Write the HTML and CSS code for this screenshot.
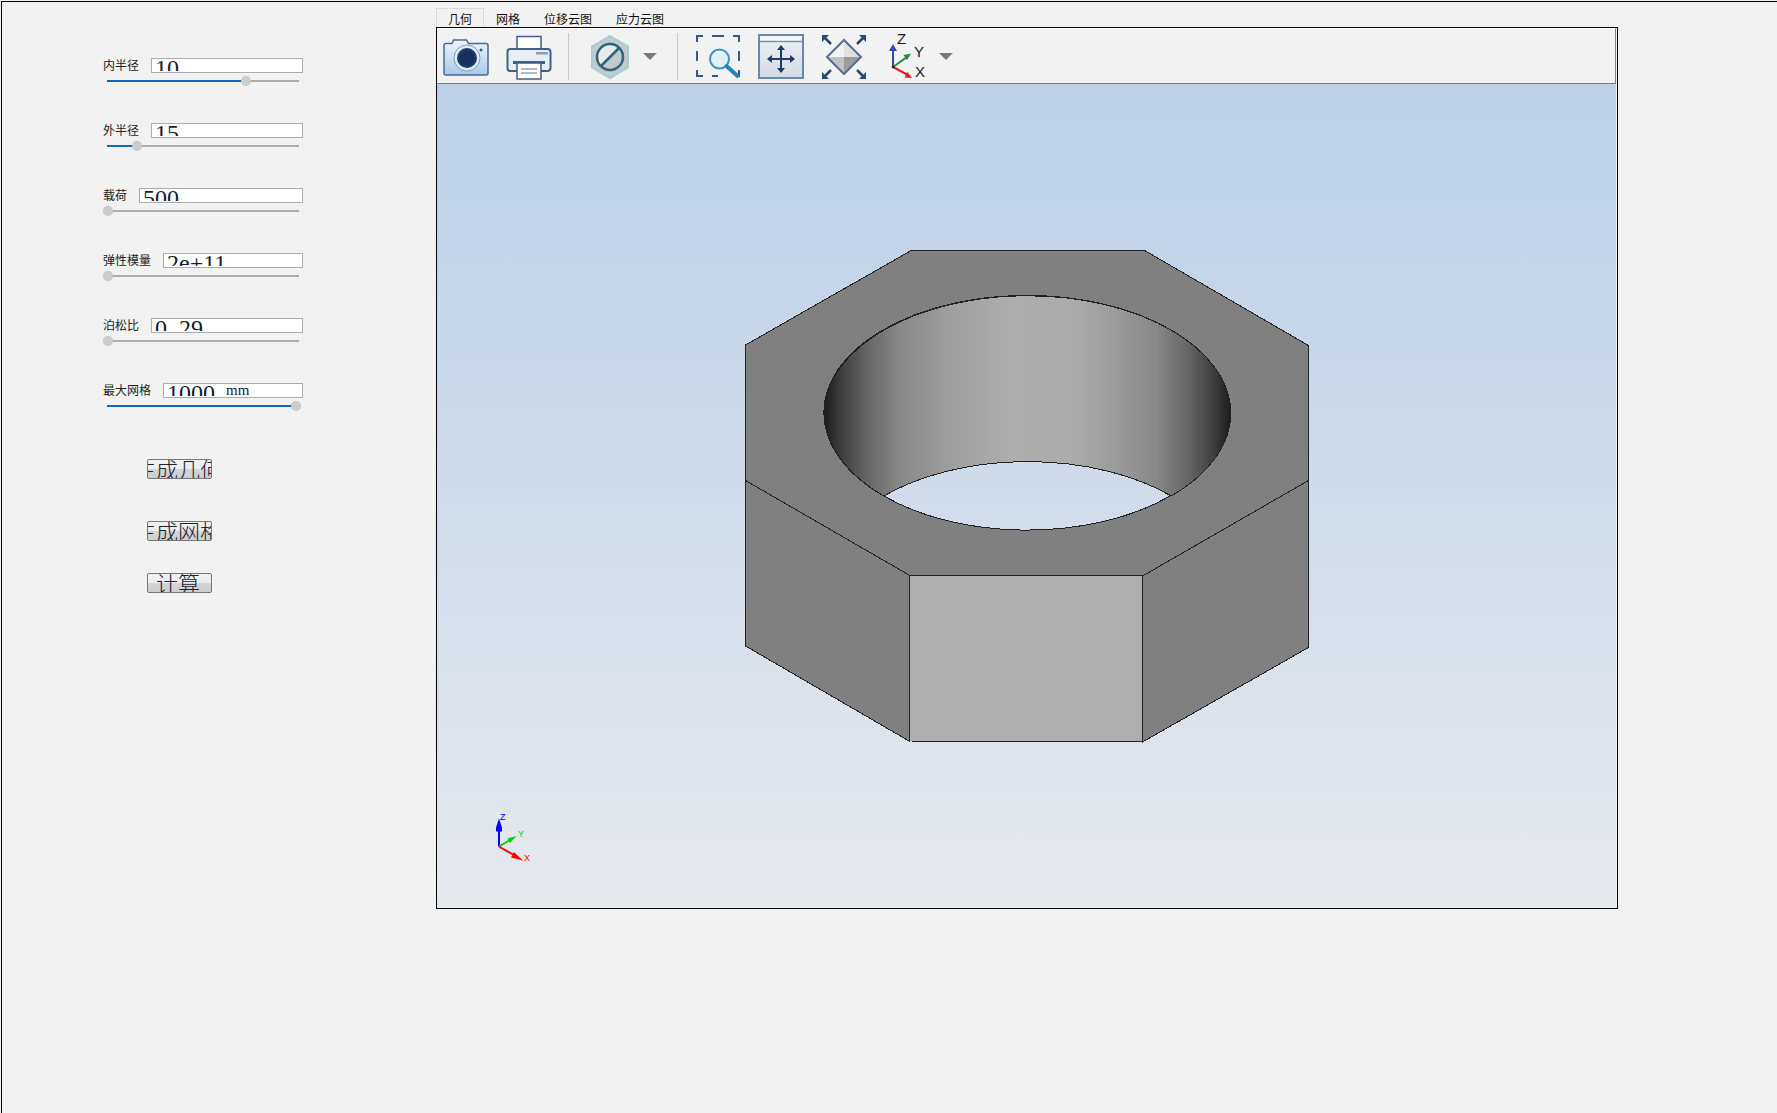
FILE: index.html
```html
<!DOCTYPE html>
<html lang="zh">
<head>
<meta charset="utf-8">
<title>几何</title>
<link rel="stylesheet" href="styles.css">
</head>
<body>
<div class="app">
  <aside class="panel">
    <div class="param">
      <div class="param-head"><span class="param-label">内半径</span><div class="field"><div class="field-clip">10</div></div></div>
      <div class="slider"><div class="slider-fill" style="width:72.4%"></div><div class="slider-thumb" style="left:72.4%"></div></div>
    </div>
    <div class="param">
      <div class="param-head"><span class="param-label">外半径</span><div class="field"><div class="field-clip">15</div></div></div>
      <div class="slider"><div class="slider-fill" style="width:15.6%"></div><div class="slider-thumb" style="left:15.6%"></div></div>
    </div>
    <div class="param">
      <div class="param-head"><span class="param-label">载荷</span><div class="field"><div class="field-clip">500</div></div></div>
      <div class="slider"><div class="slider-thumb" style="left:0.5%"></div></div>
    </div>
    <div class="param">
      <div class="param-head"><span class="param-label">弹性模量</span><div class="field"><div class="field-clip">2e+11</div></div></div>
      <div class="slider"><div class="slider-thumb" style="left:0.5%"></div></div>
    </div>
    <div class="param">
      <div class="param-head"><span class="param-label">泊松比</span><div class="field"><div class="field-clip">0<span class="dot">.</span>29</div></div></div>
      <div class="slider"><div class="slider-thumb" style="left:0.5%"></div></div>
    </div>
    <div class="param">
      <div class="param-head"><span class="param-label">最大网格</span><div class="field"><div class="field-clip">1000<span class="unit">mm</span></div></div></div>
      <div class="slider"><div class="slider-fill" style="width:98.6%"></div><div class="slider-thumb" style="left:98.6%"></div></div>
    </div>
    <button class="btn btn-geom" type="button">生成几何</button>
    <button class="btn btn-mesh" type="button">生成网格</button>
    <button class="btn btn-calc" type="button">计算</button>
  </aside>

  <main class="workspace">
    <nav class="tabs">
      <span class="tab tab-active">几何</span>
      <span class="tab">网格</span>
      <span class="tab">位移云图</span>
      <span class="tab">应力云图</span>
    </nav>
    <section class="frame">
      <div class="toolbar">
        <svg class="tool tool-camera" viewBox="0 0 48 48">
          <defs>
            <linearGradient id="camBody" x1="0" y1="0" x2="0" y2="1"><stop offset="0" stop-color="#f0f5fb"/><stop offset="1" stop-color="#a9c8ea"/></linearGradient>
          </defs>
          <path d="M2 13.500q0-2 2-2h6l1.500-3.500h13l2 3.500h17.500q2 0 2 2v27.500q0 2-2 2h-40q-2 0-2-2z" fill="url(#camBody)" stroke="#4a6a92" stroke-width="1.500"/>
          <circle cx="25" cy="26" r="13" fill="#e4edf7" stroke="#7f9cc0"/>
          <circle cx="25" cy="26" r="10" fill="#1b3a6e"/>
          <circle cx="25" cy="26" r="7.500" fill="#16305e"/>
          <circle cx="39" cy="18" r="1.500" fill="#41618c"/>
        </svg>
        <svg class="tool tool-print" viewBox="0 0 48 48">
          <rect x="12" y="4.500" width="24" height="14" fill="#fff" stroke="#3e5f88" stroke-width="1.500"/>
          <rect x="2.500" y="17" width="43" height="22" rx="3" fill="#e9eef6" stroke="#3e5f88" stroke-width="2"/>
          <rect x="31" y="20" width="12" height="2.500" fill="#8d9fb8"/>
          <rect x="8" y="29" width="32" height="3" fill="#3e5f88"/>
          <rect x="12" y="31" width="24" height="16" fill="#fff" stroke="#3e5f88" stroke-width="1.500"/>
          <path d="M16 37h16M16 41h16" stroke="#8ea2bc" stroke-width="1.500"/>
        </svg>
        <span class="tool-sep tool-sep-a"></span>
        <svg class="tool tool-hex" viewBox="0 0 48 48">
          <path d="M24 4l18 10.500v21l-18 10.500-18-10.500v-21z" fill="#c3c9cc" stroke="#a6cdd2" stroke-width="2"/>
          <path d="M14.500 34.500a13.500 13.500 0 0 1 19-19z" fill="#e8ebec"/>
          <circle cx="24" cy="25" r="13" fill="none" stroke="#2a6778" stroke-width="2.500"/>
          <path d="M15 34l18-18" stroke="#2a6778" stroke-width="2.500"/>
        </svg>
        <span class="tool-drop tool-drop-a"></span>
        <span class="tool-sep tool-sep-b"></span>
        <svg class="tool tool-zoom" viewBox="0 0 48 48">
          <path d="M3 10V4h6M18 4h12M39 4h6v6M45 19v10M45 38v6h-3M9 44H3v-6M3 29V19M18 44h6" fill="none" stroke="#3a5880" stroke-width="2"/>
          <circle cx="25.500" cy="27" r="9.500" fill="#e4eff8" stroke="#3d93c6" stroke-width="2"/>
          <path d="M32.500 34l11 10" stroke="#2684c0" stroke-width="4" stroke-linecap="round"/>
        </svg>
        <svg class="tool tool-pan" viewBox="0 0 48 48">
          <defs>
            <linearGradient id="panBody" x1="0" y1="0" x2="0" y2="1"><stop offset="0" stop-color="#eef1f6"/><stop offset="1" stop-color="#d3dae5"/></linearGradient>
          </defs>
          <rect x="2" y="3" width="44" height="43" fill="url(#panBody)" stroke="#6b87aa" stroke-width="2"/>
          <rect x="3" y="4" width="42" height="5" fill="#f4f6fa"/>
          <path d="M3 9.500h42" stroke="#7a93b3" stroke-width="1.500"/>
          <path d="M24 16v22M13 27h22" stroke="#1f3b62" stroke-width="2"/>
          <path d="M24 13l-4 5h8zM24 41l-4-5h8zM10 27l5-4v8zM38 27l-5-4v8z" fill="#1f3b62"/>
        </svg>
        <svg class="tool tool-fit" viewBox="0 0 48 48">
          <path d="M24 8l-17 17h17z" fill="#f2f2f2"/>
          <path d="M24 8l17 17h-17z" fill="#e0e0e0"/>
          <path d="M24 42l-17-17h17z" fill="#c2c2c2"/>
          <path d="M24 42l17-17h-17z" fill="#9c9c9c"/>
          <path d="M24 8l17 17-17 17-17-17z" fill="none" stroke="#5a6e8c" stroke-width="2"/>
          <path d="M4 5l7 7M44 5l-7 7M4 45l7-7M44 45l-7-7" stroke="#2b4a72" stroke-width="2.500"/>
          <path d="M2 3h7l-7 7zM46 3h-7l7 7zM2 47h7l-7-7zM46 47h-7l7-7z" fill="#2b4a72"/>
        </svg>
        <svg class="tool tool-axes" viewBox="0 0 48 48">
          <path d="M10 35v-19" stroke="#2a50a8" stroke-width="2"/>
          <path d="M10 12l-4 7h8z" fill="#2a50a8"/>
          <path d="M10 35l14-10" stroke="#1d8a3c" stroke-width="2"/>
          <path d="M28 21.500l-7.500 1.500 3.500 5z" fill="#1d8a3c"/>
          <path d="M10 35l15 8" stroke="#e02020" stroke-width="2"/>
          <path d="M29 46l-7.500-.5 3-5.500z" fill="#e02020"/>
          <circle cx="10" cy="35" r="1.300" fill="#222"/>
          <text class="axis-label" x="14" y="12">Z</text>
          <text class="axis-label" x="31" y="24.500">Y</text>
          <text class="axis-label" x="32" y="44.500">X</text>
        </svg>
        <span class="tool-drop tool-drop-b"></span>
      </div>
      <div class="viewport">
        <svg class="scene" viewBox="437 84 1179 823">
          <defs>
            <linearGradient id="wall" x1="0" y1="0" x2="1" y2="0">
              <stop offset="0" stop-color="#1c1c1c"/>
              <stop offset="0.04" stop-color="#3c3c3c"/>
              <stop offset="0.1" stop-color="#636363"/>
              <stop offset="0.18" stop-color="#868686"/>
              <stop offset="0.3" stop-color="#9d9d9d"/>
              <stop offset="0.45" stop-color="#adadad"/>
              <stop offset="0.6" stop-color="#acacac"/>
              <stop offset="0.72" stop-color="#9b9b9b"/>
              <stop offset="0.82" stop-color="#868686"/>
              <stop offset="0.9" stop-color="#636363"/>
              <stop offset="0.96" stop-color="#3c3c3c"/>
              <stop offset="1" stop-color="#1c1c1c"/>
            </linearGradient>
          </defs>
          <g stroke="#222" stroke-width="1" shape-rendering="crispEdges">
            <polygon points="745.500,480 909,574.500 909,740.500 745.500,645.500" fill="#808080"/>
            <polygon points="1308.500,480 1142.500,575.500 1142.500,741.500 1308.500,647" fill="#808080"/>
            <polygon points="909,574.500 1142.500,575.500 1142.500,741.500 909,740.500" fill="#aeaeae"/>
            <path fill="#808080" fill-rule="evenodd" d="M912 249.500L1145.500 250.500L1308.500 345V480L1142.500 575.500L909 574.500L745.500 480V344.500ZM823.800 412.200a203.200 117.300 0 1 0 406.400 0a203.200 117.300 0 1 0 -406.400 0Z"/>
            <path fill="url(#wall)" d="M883.800 495.500A203.200 117.300 0 1 1 1171.300 495.500A203.200 117.300 0 0 0 883.800 495.500Z"/>
          </g>
          <path d="M499 846V826" stroke="#0000ff" stroke-width="2"/>
          <path d="M499 818l-3 9v4h6v-4z" fill="#0000ff"/>
          <path d="M499 846l10-6" stroke="#00d000" stroke-width="2"/>
          <path d="M516.500 835.500l-9 2.500 2.500 4.500z" fill="#00d000"/>
          <path d="M499 846l14 8" stroke="#ff0000" stroke-width="2"/>
          <path d="M523 860l-12-3 3-5.500z" fill="#ff0000"/>
          <text class="mini-label mini-z" x="500" y="819">Z</text>
          <text class="mini-label mini-y" x="518" y="836">Y</text>
          <text class="mini-label mini-x" x="524" y="860">X</text>
        </svg>
      </div>
    </section>
  </main>
</div>
</body>
</html>
```
FILE: styles.css
```css
* { box-sizing: border-box; }
html, body { margin: 0; height: 100%; }
body {
  background: #f2f2f2;
  overflow: hidden;
  font-family: "Noto Sans CJK SC", "Liberation Sans", sans-serif;
  padding: 1px 0 0 1px;
}
.app {
  display: flex;
  height: 100%;
  border-top: 1px solid #000;
  border-left: 1px solid #000;
}

/* left parameter panel */
.panel {
  width: 434px;
  flex: none;
  padding: 56px 0 0 101px;
  display: flex;
  flex-direction: column;
  align-items: flex-start;
}
.param { width: 200px; height: 65px; }
.param-head { display: flex; align-items: flex-start; gap: 12px; height: 15px; }
.param-label { font-size: 12px; line-height: 13px; color: #222; white-space: nowrap; }
.field {
  flex: 1;
  height: 15px;
  background: #fff;
  border: 1px solid #adadad;
  padding: 0 0 1px 3px;
}
.field-clip {
  height: 12px;
  overflow: hidden;
  font-family: "Liberation Serif", serif;
  font-size: 24px;
  line-height: 18px;
  color: #161c30;
  white-space: nowrap;
}
.dot { display: inline-block; width: 12px; }
.unit { font-size: 15px; line-height: 0; margin-left: 11px; vertical-align: 6px; }
.slider {
  position: relative;
  margin: 7px 0 0 4px;
  width: 192px;
  height: 2px;
  background: #adadad;
}
.slider-fill { height: 2px; background: #1267b8; }
.slider-thumb {
  position: absolute;
  top: -4px;
  width: 10px;
  height: 10px;
  margin-left: -5px;
  border-radius: 50%;
  background: #cdcdcd;
  outline: 1px dotted #c2c2c2;
  outline-offset: -1px;
}
.btn {
  width: 65px;
  height: 20px;
  margin-left: 44px;
  padding: 0 3px 3px 0;
  display: flex;
  align-items: center;
  justify-content: center;
  overflow: hidden;
  white-space: nowrap;
  border: 1px solid #777;
  border-radius: 2px;
  background: linear-gradient(#f0f0f0 0, #ececec 50%, #d4d4d4 50%, #cfcfcf 100%);
  font-family: "Noto Sans CJK SC", sans-serif;
  font-weight: 300;
  font-size: 22px;
  line-height: 20px;
  color: #1c2236;
}
.btn-geom { margin-top: 11px; }
.btn-mesh { margin-top: 42px; }
.btn-calc { margin-top: 32px; }

/* right workspace */
.workspace {
  display: flex;
  flex-direction: column;
  padding-top: 6px;
  width: 1182px;
}
.tabs { display: flex; height: 19px; }
.tab {
  font-size: 12px;
  line-height: 22px;
  height: 20px;
  padding: 0 12px;
  color: #111;
  white-space: nowrap;
}
.tab-active {
  background: #f2f2f2;
  border: 1px solid #dadada;
  border-bottom: none;
  padding: 0 11px;
  line-height: 20px;
}
.frame {
  position: relative;
  height: 882px;
  border: 1px solid #000;
  display: flex;
  flex-direction: column;
  background: #f2f2f2;
}
.toolbar {
  flex: none;
  height: 56px;
  display: flex;
  align-items: center;
  border-top: 1px solid #fff;
  border-bottom: 1px solid #7c7c7c;
  border-right: 1px solid #7c7c7c;
  margin-right: 1px;
}
.tool { width: 48px; height: 48px; flex: none; margin-left: 15px; }
.tool-camera { margin-left: 5px; }
.tool-hex { margin-left: 17px; }
.tool-zoom { margin-left: 16px; }
.tool-sep { flex: none; width: 1px; height: 47px; background: #c9c9c9; }
.tool-sep-a { margin-left: 15px; }
.tool-sep-b { margin-left: 20px; }
.tool-drop {
  flex: none;
  width: 0;
  height: 0;
  border-left: 7.5px solid transparent;
  border-right: 7.5px solid transparent;
  border-top: 7px solid #7b7b7b;
}
.tool-drop-a { margin-left: 9px; }
.tool-drop-b { margin-left: 8px; }
.axis-label { font-family: "Liberation Sans", sans-serif; font-size: 15px; fill: #1a1a1a; }
.viewport {
  flex: 1;
  margin-right: 1px;
  background: linear-gradient(#bbcfe6, #e6e9ee);
}
.scene { display: block; width: 100%; height: 100%; }
.mini-label { font-family: "Liberation Sans", sans-serif; font-size: 9px; }
.mini-z { fill: #0000ff; }
.mini-y { fill: #00d000; }
.mini-x { fill: #ff0000; }
```
